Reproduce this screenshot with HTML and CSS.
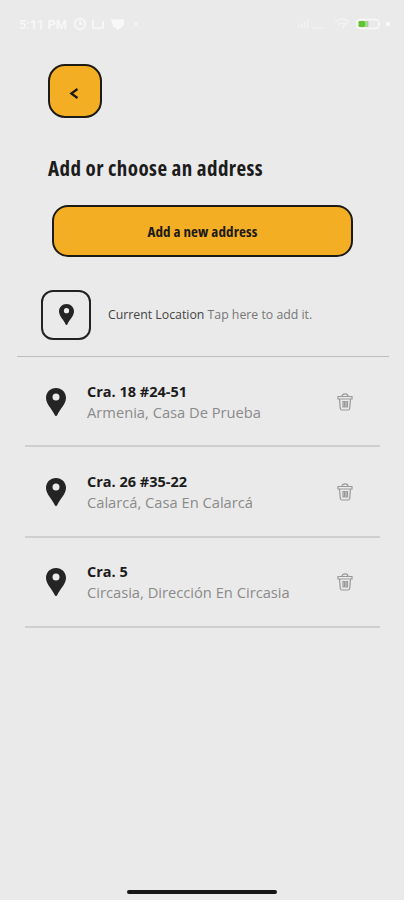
FILE: index.html
```html
<!DOCTYPE html>
<html lang="en">
<head>
    <meta charset="UTF-8">
    <meta name="viewport" content="width=device-width, initial-scale=1.0">
    <title>Addresses</title>
    <link rel="stylesheet" href="styles.css">
</head>
<body>
    <svg class="symbols" width="0" height="0">
        <symbol id="pin" viewBox="0 0 20 28">
            <path fill-rule="evenodd" d="M10 0C4.300 0 0 4.300 0 9.800C0 16.500 6.500 21.500 8.700 27C9.200 28.300 10.800 28.300 11.300 27C13.500 21.500 20 16.500 20 9.800C20 4.300 15.700 0 10 0ZM10 5.400A3.500 3.500 0 1 1 10 12.400A3.500 3.500 0 1 1 10 5.400Z"/>
        </symbol>
        <symbol id="trash" viewBox="0 0 16 18">
            <path d="M1 3.500H15V6H1ZM5 3.500C5 0 11 0 11 3.500M2.500 6L3.300 15.500Q3.500 17 5 17H11Q12.500 17 12.700 15.500L13.500 6M6 8.500H7.500V14H6ZM9 8.500H10.500V14H9Z"/>
        </symbol>
    </svg>

    <div class="status-bar">
        <span class="time">5:11 PM</span>
        <svg class="status-icons" width="66" height="16" viewBox="0 0 66 16">
            <circle cx="7" cy="8" r="5.300"/>
            <path d="M7 4.500V8H10M20 4V12H30V5M25 12V14"/>
            <path class="solid" d="M39 4H50V9L45 13L41 10Z"/>
            <circle class="solid" cx="63" cy="8" r=".6"/>
        </svg>
        <svg class="status-icons right" width="96" height="16" viewBox="0 0 96 16">
            <path class="faint" d="M2 12V9M5 12V7M8 12V5M11 12V3M15 12H26"/>
            <path class="faint" d="M38 6Q45 0 52 6M41 9Q45 5 49 9M45 12L52 4"/>
            <rect x="60" y="3.500" width="22" height="9" rx="4"/>
            <rect class="charge" x="61.500" y="5" width="6.500" height="6" rx="1"/>
            <rect class="charge light" x="68" y="5" width="3.500" height="6" rx="1"/>
            <circle class="solid" cx="91" cy="8" r="1.500"/>
        </svg>
    </div>

    <button class="back-button" aria-label="Back">
        <svg width="10" height="14" viewBox="0 0 10 14"><path d="M8.500 2L2.300 6.500L8.500 11"/></svg>
    </button>

    <h1>Add or choose an address</h1>

    <button class="add-button">Add a new address</button>

    <div class="current-location">
        <div class="pin-box"><svg class="pin"><use href="#pin"/></svg></div>
        <p><strong>Current Location</strong> Tap here to add it.</p>
    </div>

    <ul class="address-list">
        <li>
            <svg class="pin"><use href="#pin"/></svg>
            <div class="address">
                <h2>Cra. 18 #24-51</h2>
                <p>Armenia, Casa De Prueba</p>
            </div>
            <svg class="trash"><use href="#trash"/></svg>
        </li>
        <li>
            <svg class="pin"><use href="#pin"/></svg>
            <div class="address">
                <h2>Cra. 26 #35-22</h2>
                <p>Calarcá, Casa En Calarcá</p>
            </div>
            <svg class="trash"><use href="#trash"/></svg>
        </li>
        <li>
            <svg class="pin"><use href="#pin"/></svg>
            <div class="address">
                <h2>Cra. 5</h2>
                <p>Circasia, Dirección En Circasia</p>
            </div>
            <svg class="trash"><use href="#trash"/></svg>
        </li>
    </ul>

    <div class="home-bar"></div>
</body>
</html>
```
FILE: styles.css
```css
* {
    box-sizing: border-box;
}

body {
    display: flex;
    flex-direction: column;
    height: 900px;
    margin: 0;
    background: #eaeaea;
    font-family: "Open Sans", "Noto Sans", sans-serif;
    color: #1c1c1c;
    overflow: hidden;
}

h1, h2, p, ul {
    margin: 0;
    padding: 0;
}

button {
    display: flex;
    align-items: center;
    justify-content: center;
    padding: 0;
    background: #f3ae24;
    border: 2px solid #1d1b14;
    color: #1d1b14;
}

.symbols {
    position: absolute;
}

/* status bar */
.status-bar {
    display: flex;
    align-items: center;
    height: 48px;
    padding: 0 11px 0 19px;
}

.time {
    width: 54px;
    font-family: Roboto, sans-serif;
    font-size: 12.8px;
    font-weight: 600;
    white-space: nowrap;
    color: #f8f8f8;
}

.status-icons {
    fill: none;
    stroke: #f8f8f8;
    stroke-width: 1.7;
}

.status-icons .solid {
    fill: #f8f8f8;
}

.status-icons .faint {
    stroke: #f1f1f1;
}

.status-icons .charge {
    fill: #62c331;
    stroke: none;
}

.status-icons .light {
    fill: #a5d78d;
}

.right {
    margin-left: auto;
}

/* top */
.back-button {
    width: 54px;
    height: 54px;
    margin: 16px 0 0 48px;
    border-radius: 17px;
}

.back-button svg {
    fill: none;
    stroke: #1d1b14;
    stroke-width: 2.2;
    margin: 5px 2px 0 0;
}

h1 {
    height: 30px;
    margin: 35px 0 0 48px;
    font-size: 21px;
    font-stretch: 75%;
    font-weight: 700;
    letter-spacing: 0.42px;
    line-height: 30px;
    white-space: nowrap;
}

.add-button {
    width: 301px;
    height: 52px;
    margin: 22px 0 0 52px;
    border-radius: 16px;
    font-family: "Open Sans", sans-serif;
    font-size: 15px;
    font-weight: 700;
    font-stretch: 75%;
    letter-spacing: 0.14px;
}

/* current location */
.current-location {
    display: flex;
    align-items: center;
    height: 84px;
    margin: 16px 15px 0 17px;
    padding: 0 0 0 24px;
    border-bottom: 1px solid #bdbdbd;
}

.pin-box {
    display: flex;
    align-items: center;
    justify-content: center;
    width: 50px;
    height: 50px;
    margin-right: 17px;
    border: 2px solid #222;
    border-radius: 12px;
}

.pin {
    width: 20px;
    height: 28px;
    fill: #242424;
}

.pin-box .pin {
    width: 15px;
    height: 21px;
}

.current-location p {
    font-size: 12.3px;
    color: #777;
    white-space: nowrap;
}

.current-location strong {
    font-weight: 500;
    color: #444;
}

/* saved addresses */
.address-list {
    margin: 0 24px 0 25px;
    list-style: none;
}

.address-list li {
    display: flex;
    align-items: center;
    height: 90.3px;
    padding: 1px 27px 0 21px;
    border-bottom: 2px solid #cfcfcf;
}

.address {
    flex: 1;
    margin-left: 21px;
    white-space: nowrap;
}

.address h2 {
    font-size: 14.5px;
    line-height: 20px;
}

.address p {
    font-size: 14.7px;
    line-height: 20px;
    color: #8b8b8b;
}

.trash {
    width: 16px;
    height: 18px;
    fill: none;
    stroke: #999;
    stroke-width: 1.2;
}

.home-bar {
    width: 150px;
    height: 4px;
    margin: auto auto 6px 127px;
    background: #161616;
    border-radius: 2px;
}
```
